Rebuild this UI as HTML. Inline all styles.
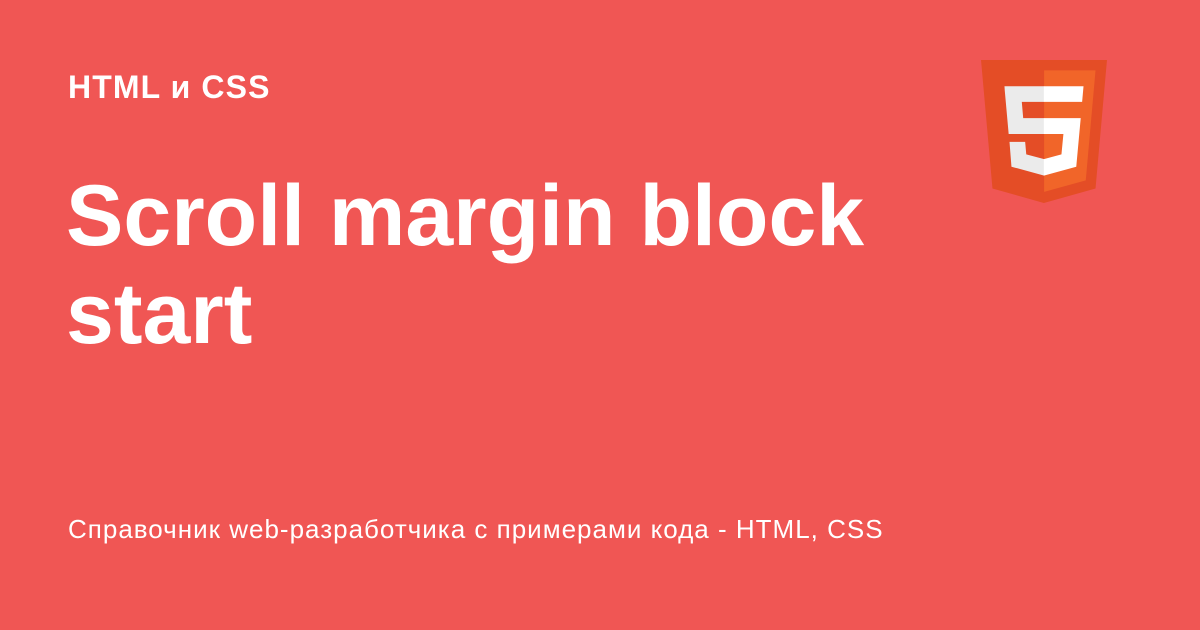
<!DOCTYPE html>
<html><head><meta charset="utf-8"><style>
body{margin:0;width:1200px;height:630px;background:#f05654;font-family:"Liberation Sans",Arial,sans-serif;color:#fff;position:relative;overflow:hidden}
.t{position:absolute;left:68px;top:69px;font-size:32px;font-weight:bold;letter-spacing:1.1px}
h1{position:absolute;left:66px;top:167px;margin:0;font-size:86px;line-height:98px;font-weight:bold;width:900px}
.f{position:absolute;left:68px;top:514px;font-size:26px;letter-spacing:1px}
svg{position:absolute;left:981px;top:60px}
</style></head><body>
<div class="t">HTML и CSS</div>
<h1>Scroll margin block start</h1>
<div class="f">Справочник web-разработчика с примерами кода - HTML, CSS</div>
<svg width="126" height="143" viewBox="30 0 451 512">
<polygon fill="#e44d26" points="71,460 30,0 481,0 440,460 255,512"/>
<polygon fill="#f16529" points="256,472 405,431 440,37 256,37"/>
<polygon fill="#ebebeb" points="256,208 181,208 176,150 256,150 256,94 114,94 115,109 129,265 256,265"/>
<polygon fill="#ebebeb" points="256,355 192,338 188,293 132,293 139,382 256,414"/>
<polygon fill="#fff" points="255,208 255,265 325,265 318,338 255,355 255,414 371,382 387,208"/>
<polygon fill="#fff" points="255,94 255,150 392,150 397,94"/>
</svg>
</body></html>
